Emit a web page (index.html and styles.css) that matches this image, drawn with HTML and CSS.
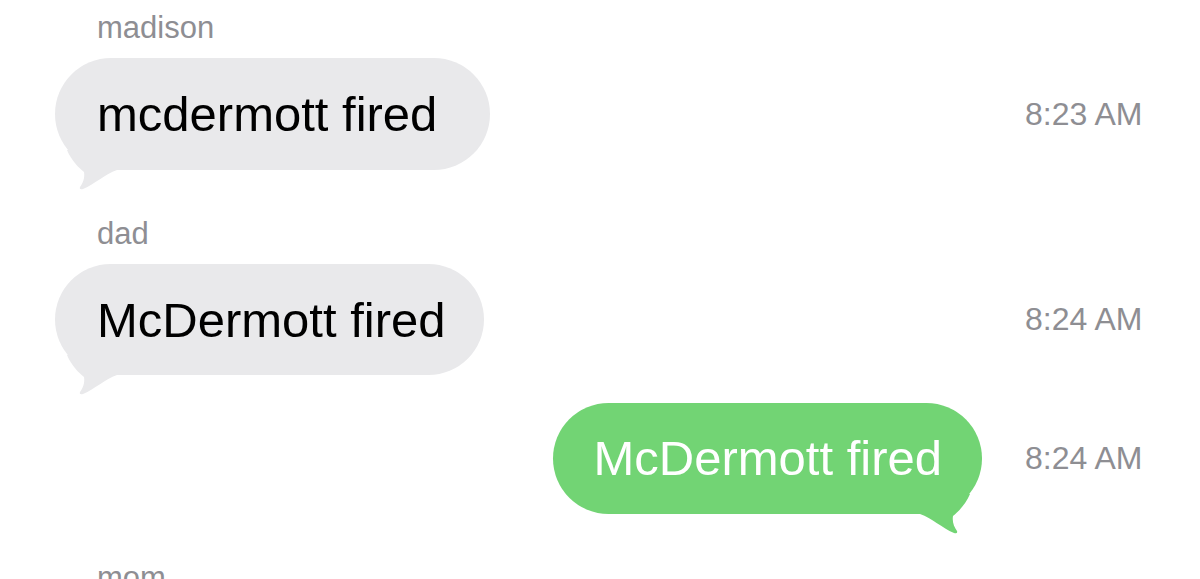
FILE: index.html
```html
<!DOCTYPE html>
<html>
<head>
<meta charset="utf-8">
<link rel="stylesheet" href="styles.css">
</head>
<body>
<div class="thread">
  <div class="group">
    <div class="name">madison</div>
    <div class="row">
      <div class="bubble in pad-wide">mcdermott fired
        <svg class="tail tail-left" viewBox="0 0 70 40" width="70" height="40"><path d="M12 0 C16 10 24 18 29 22 C30 28 28 33 25 37 Q24 40 28 39 C40 34 50 24 62 20 L62 0 Z"/></svg>
      </div>
      <div class="time">8:23 AM</div>
    </div>
  </div>
  <div class="group">
    <div class="name">dad</div>
    <div class="row">
      <div class="bubble in pad-narrow">McDermott fired
        <svg class="tail tail-left" viewBox="0 0 70 40" width="70" height="40"><path d="M12 0 C16 10 24 18 29 22 C30 28 28 33 25 37 Q24 40 28 39 C40 34 50 24 62 20 L62 0 Z"/></svg>
      </div>
      <div class="time">8:24 AM</div>
    </div>
  </div>
  <div class="group group-out">
    <div class="row row-out">
      <div class="bubble out pad-out">McDermott fired
        <svg class="tail tail-right" viewBox="0 0 70 40" width="70" height="40"><path d="M12 0 C16 10 24 18 29 22 C30 28 28 33 25 37 Q24 40 28 39 C40 34 50 24 62 20 L62 0 Z"/></svg>
      </div>
      <div class="time">8:24 AM</div>
    </div>
  </div>
  <div class="group">
    <div class="name">mom</div>
  </div>
</div>
</body>
</html>
```
FILE: styles.css
```css
html, body {
  margin: 0;
  padding: 0;
  background: #ffffff;
  overflow: hidden;
}
body {
  font-family: "Liberation Sans", Arial, sans-serif;
}
.thread {
  padding: 8px 58px 0 55px;
  display: flex;
  flex-direction: column;
  gap: 44px;
}
.group-out {
  margin-top: -16px;
}
.name {
  font-size: 31px;
  line-height: 40px;
  color: #8e8e93;
  padding-left: 42px;
  margin-bottom: 10px;
}
.row {
  display: flex;
  align-items: center;
  justify-content: space-between;
}
.row-out {
  justify-content: flex-end;
  gap: 43px;
}
.bubble {
  position: relative;
  font-size: 49px;
  line-height: 56px;
  padding: 28px 42px;
  border-radius: 56px;
  white-space: nowrap;
}
.pad-wide {
  padding-right: 53px;
}
.pad-narrow {
  padding-right: 38px;
  padding-bottom: 27px;
}
.pad-out {
  padding: 27px 40px 28px 40px;
}
.bubble.in {
  background: #e9e9eb;
  color: #000000;
}
.bubble.out {
  background: #72d474;
  color: #ffffff;
}
.tail {
  position: absolute;
  bottom: -20px;
}
.tail-left {
  left: 0;
  fill: #e9e9eb;
}
.tail-right {
  right: 0;
  fill: #72d474;
  transform: scaleX(-1);
}
.time {
  width: 117px;
  text-align: right;
  font-size: 32px;
  color: #8e8e93;
  white-space: nowrap;
}
```
